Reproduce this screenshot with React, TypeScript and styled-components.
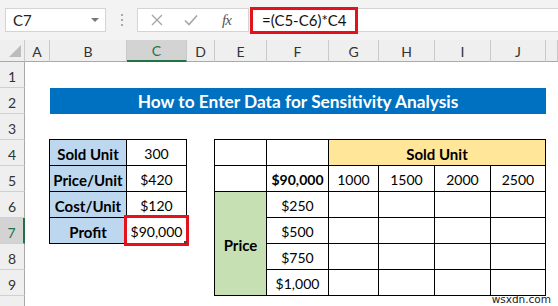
import React from 'react'
import styled, { createGlobalStyle } from 'styled-components'

const GlobalStyle = createGlobalStyle`
  html, body {
    margin: 0;
    padding: 0;
    background: #ffffff;
    width: 558px;
    height: 306px;
    overflow: hidden;
  }
  * { box-sizing: border-box; }
`

const cellFont = `'Lato', 'Open Sans', sans-serif`

const Window = styled.div`
  position: relative;
  width: 558px;
  height: 306px;
  overflow: hidden;
  font-family: ${cellFont};
  background: #ffffff;
`

const Toolbar = styled.div`
  height: 40px;
  background: #f3f3f3;
  display: flex;
  align-items: center;
  padding-left: 5px;
`

const NameBox = styled.div`
  width: 101px;
  height: 24px;
  background: #fff;
  border: 1px solid #d4d4d4;
  display: flex;
  align-items: center;
  justify-content: space-between;
  padding: 0 6px 0 7px;
  font-size: 15px;
  color: #222;
`

const Caret = styled.span`
  width: 0;
  height: 0;
  border-left: 4px solid transparent;
  border-right: 4px solid transparent;
  border-top: 4px solid #777;
`

const Dots = styled.div`
  width: 31px;
  display: flex;
  flex-direction: column;
  align-items: center;
  gap: 3px;
  span {
    width: 2px;
    height: 2px;
    background: #a8a8a8;
  }
`

const FuncBox = styled.div`
  width: 112px;
  height: 24px;
  background: #fff;
  border: 1px solid #d4d4d4;
  display: flex;
  align-items: center;
  padding-left: 13px;
  gap: 21px;
`

const Fx = styled.span`
  font-family: 'Liberation Serif', serif;
  font-style: italic;
  font-size: 15px;
  color: #555;
  margin-left: 3px;
  letter-spacing: -1px;
`

const FormulaBar = styled.div`
  flex: 1;
  height: 24px;
  background: #fff;
  border: 1px solid #d4d4d4;
  border-right: none;
  margin-left: 2px;
  display: flex;
  align-items: center;
`

const FormulaText = styled.div`
  height: 27px;
  width: 108px;
  border: 3px solid #e3121c;
  margin-left: -2px;
  display: flex;
  align-items: center;
  padding-left: 9px;
  font-size: 15px;
  color: #111;
`

const Sheet = styled.div`
  display: grid;
  grid-template-columns: 25px 25px 77px 60px 28px 52px 62px 50px 56px 56px 55px 1fr;
  grid-template-rows: 22px repeat(10, 26px);
`

const Corner = styled.div`
  background: #efefef;
  border-right: 1px solid #c9c9c9;
  border-bottom: 1px solid #a9a9a9;
  position: relative;
  &::after {
    content: '';
    position: absolute;
    right: 3px;
    bottom: 4px;
    border-left: 12px solid transparent;
    border-bottom: 12px solid #bcbcbc;
  }
`

const ColHead = styled.div<{ $active?: boolean }>`
  background: ${p => (p.$active ? '#d3d3d3' : '#efefef')};
  border-right: 1px solid #c9c9c9;
  border-bottom: ${p => (p.$active ? '2px solid #217346' : '1px solid #a9a9a9')};
  display: flex;
  align-items: center;
  justify-content: center;
  font-size: 14px;
  color: ${p => (p.$active ? '#217346' : '#333')};
  padding-top: 1px;
`

const RowHead = styled.div<{ $active?: boolean; $row: number }>`
  grid-column: 1;
  grid-row: ${p => p.$row};
  background: ${p => (p.$active ? '#d3d3d3' : '#efefef')};
  border-right: ${p => (p.$active ? '2px solid #217346' : '1px solid #a9a9a9')};
  border-bottom: 1px solid #d0d0d0;
  display: flex;
  align-items: center;
  justify-content: center;
  font-size: 14px;
  color: ${p => (p.$active ? '#217346' : '#333')};
  padding-top: 3px;
`

const Banner = styled.div`
  grid-column: 3 / 12;
  grid-row: 3;
  background: #0070c0;
  color: #fff;
  font-weight: 700;
  font-size: 17.3px;
  display: flex;
  align-items: center;
  justify-content: center;
  padding-top: 1px;
`

const Table = styled.div<{ $col: string; $row: string; $cols: string }>`
  grid-column: ${p => p.$col};
  grid-row: ${p => p.$row};
  display: grid;
  grid-template-columns: ${p => p.$cols};
  grid-auto-rows: 1fr;
  gap: 1px;
  padding: 1px;
  background: #000;
  width: calc(100% + 1px);
  height: calc(100% + 1px);
  margin-left: -1px;
  margin-top: -1px;
`

const Cell = styled.div<{ $bg?: string; $bold?: boolean; $span?: string; $rowSpan?: string; $size?: number }>`
  background: ${p => p.$bg || '#fff'};
  font-weight: ${p => (p.$bold ? 700 : 400)};
  font-size: ${p => p.$size || 14}px;
  color: #000;
  display: flex;
  align-items: center;
  justify-content: center;
  padding-top: 2px;
  grid-column: ${p => p.$span || 'auto'};
  grid-row: ${p => p.$rowSpan || 'auto'};
  white-space: nowrap;
`

const Selected = styled(Cell)`
  outline: 3px solid #e3121c;
  outline-offset: 0px;
  position: relative;
  z-index: 2;
  &::after {
    content: '';
    position: absolute;
    right: -1px;
    bottom: -1px;
    width: 3px;
    height: 3px;
    background: #444;
  }
`

const Watermark = styled.div`
  position: absolute;
  right: 7px;
  bottom: 1px;
  font-family: 'DejaVu Sans', sans-serif;
  font-size: 10.5px;
  line-height: 11px;
  color: #222;
`

const cols = ['A', 'B', 'C', 'D', 'E', 'F', 'G', 'H', 'I', 'J', '']
const blue = '#bdd7ee'
const yellow = '#ffe699'
const green = '#c6e0b4'

const Cross = () => (
  <svg width="12" height="12" viewBox="0 0 12 12">
    <path d="M1 1 L11 11 M11 1 L1 11" stroke="#a6a6a6" strokeWidth="1.4" fill="none" />
  </svg>
)

const Check = () => (
  <svg width="14" height="12" viewBox="0 0 14 12">
    <path d="M1 6.5 L5 10.5 L13 1.5" stroke="#a6a6a6" strokeWidth="1.6" fill="none" />
  </svg>
)

export default function App() {
  return (
    <Window>
      <GlobalStyle />
      <Toolbar>
        <NameBox>
          C7
          <Caret />
        </NameBox>
        <Dots>
          <span />
          <span />
          <span />
        </Dots>
        <FuncBox>
          <Cross />
          <Check />
          <Fx>fx</Fx>
        </FuncBox>
        <FormulaBar>
          <FormulaText>=(C5-C6)*C4</FormulaText>
        </FormulaBar>
      </Toolbar>
      <Sheet>
        <Corner />
        {cols.map((c, i) => (
          <ColHead key={i} $active={c === 'C'}>
            {c}
          </ColHead>
        ))}
        {[1, 2, 3, 4, 5, 6, 7, 8, 9, 10].map(n => (
          <RowHead key={n} $active={n === 7} $row={n + 1}>
            {n < 10 ? n : ''}
          </RowHead>
        ))}
        <Banner>How to Enter Data for Sensitivity Analysis</Banner>

        <Table $col="3 / 5" $row="5 / 9" $cols="76px 1fr">
          <Cell $bg={blue} $bold $size={15}>Sold Unit</Cell>
          <Cell>300</Cell>
          <Cell $bg={blue} $bold $size={15}>Price/Unit</Cell>
          <Cell>$420</Cell>
          <Cell $bg={blue} $bold $size={15}>Cost/Unit</Cell>
          <Cell>$120</Cell>
          <Cell $bg={blue} $bold $size={15}>Profit</Cell>
          <Selected>$90,000</Selected>
        </Table>

        <Table $col="6 / 12" $row="5 / 11" $cols="51px 61px 49px 55px 55px 1fr">
          <Cell />
          <Cell />
          <Cell $bg={yellow} $bold $size={15} $span="3 / 7">Sold Unit</Cell>
          <Cell />
          <Cell $bold>$90,000</Cell>
          <Cell>1000</Cell>
          <Cell>1500</Cell>
          <Cell>2000</Cell>
          <Cell>2500</Cell>
          <Cell $bg={green} $bold $size={15} $span="1" $rowSpan="3 / 7">Price</Cell>
          {['$250', '$500', '$750', '$1,000'].map(v => (
            <React.Fragment key={v}>
              <Cell>{v}</Cell>
              <Cell />
              <Cell />
              <Cell />
              <Cell />
            </React.Fragment>
          ))}
        </Table>
      </Sheet>
      <Watermark>wsxdn.com</Watermark>
    </Window>
  )
}
